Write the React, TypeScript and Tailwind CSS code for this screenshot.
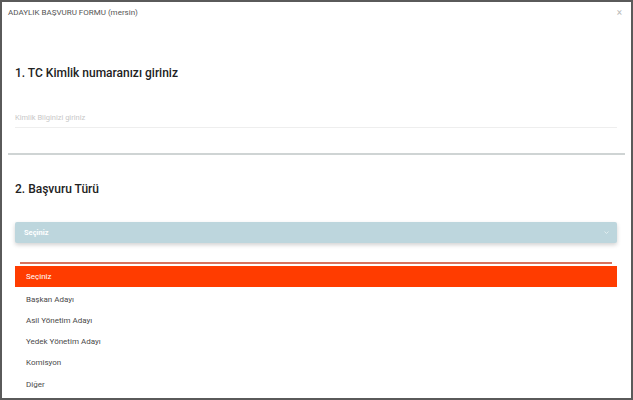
import React from "react";

export default function App() {
  const options = ["Başkan Adayı", "Asil Yönetim Adayı", "Yedek Yönetim Adayı", "Komisyon", "Diğer"];
  return (
    <div
      className="w-[633px] h-[400px] bg-white border-2 border-[#5a5a5a] overflow-hidden flex flex-col"
      style={{ fontFamily: "Roboto, 'Noto Sans', sans-serif" }}
    >
      <div className="flex items-center justify-between h-[20px] pt-[2px] pl-[6px] pr-[9px]">
        <span className="text-[8px] text-[#555] leading-none">ADAYLIK BAŞVURU FORMU (mersin)</span>
        <span className="text-[10px] text-[#bbb] leading-none">×</span>
      </div>
      <div className="pl-[13px] pr-[14px] mt-[43px]">
        <h2 className="text-[12px] font-medium text-[#222] leading-[17px]">1. TC Kimlik numaranızı giriniz</h2>
        <div className="mt-[31px] border-b border-[#eee] pb-[4px]">
          <span className="text-[7.5px] text-[#c8c8c8] leading-[10px] block">Kimlik Bilginizi giriniz</span>
        </div>
      </div>
      <div className="mx-[6px] mt-[25px] h-[2px] bg-[#cfd4d4]" />
      <div className="pl-[13px] pr-[14px] mt-[26px]">
        <h2 className="text-[12px] font-medium text-[#222] leading-[17px]">2. Başvuru Türü</h2>
        <div className="mt-[24px] h-[21px] bg-[#bdd6dd] rounded-[2px] shadow-[0_2px_4px_rgba(0,0,0,0.18)] flex items-center justify-between pl-[9px] pr-[8px]">
          <span className="text-[7.5px] font-bold text-white leading-none">Seçiniz</span>
          <svg width="5" height="3" viewBox="0 0 5 3">
            <path d="M0.5 0.5 L2.5 2.5 L4.5 0.5" stroke="#e8f1f3" strokeWidth="0.8" fill="none" />
          </svg>
        </div>
        <div className="mt-[19px] mx-[5px] h-[2px] bg-[#d9735e]" />
        <div className="mt-[2px] h-[21px] bg-[#ff3c00] flex items-center pl-[11px]">
          <span className="text-[8px] text-white leading-none">Seçiniz</span>
        </div>
        <div className="flex flex-col mt-[2px]">
          {options.map((o) => (
            <div key={o} className="h-[21.25px] flex items-center pl-[11px]">
              <span className="text-[8px] text-[#4a4a4a] leading-none">{o}</span>
            </div>
          ))}
        </div>
      </div>
    </div>
  );
}
